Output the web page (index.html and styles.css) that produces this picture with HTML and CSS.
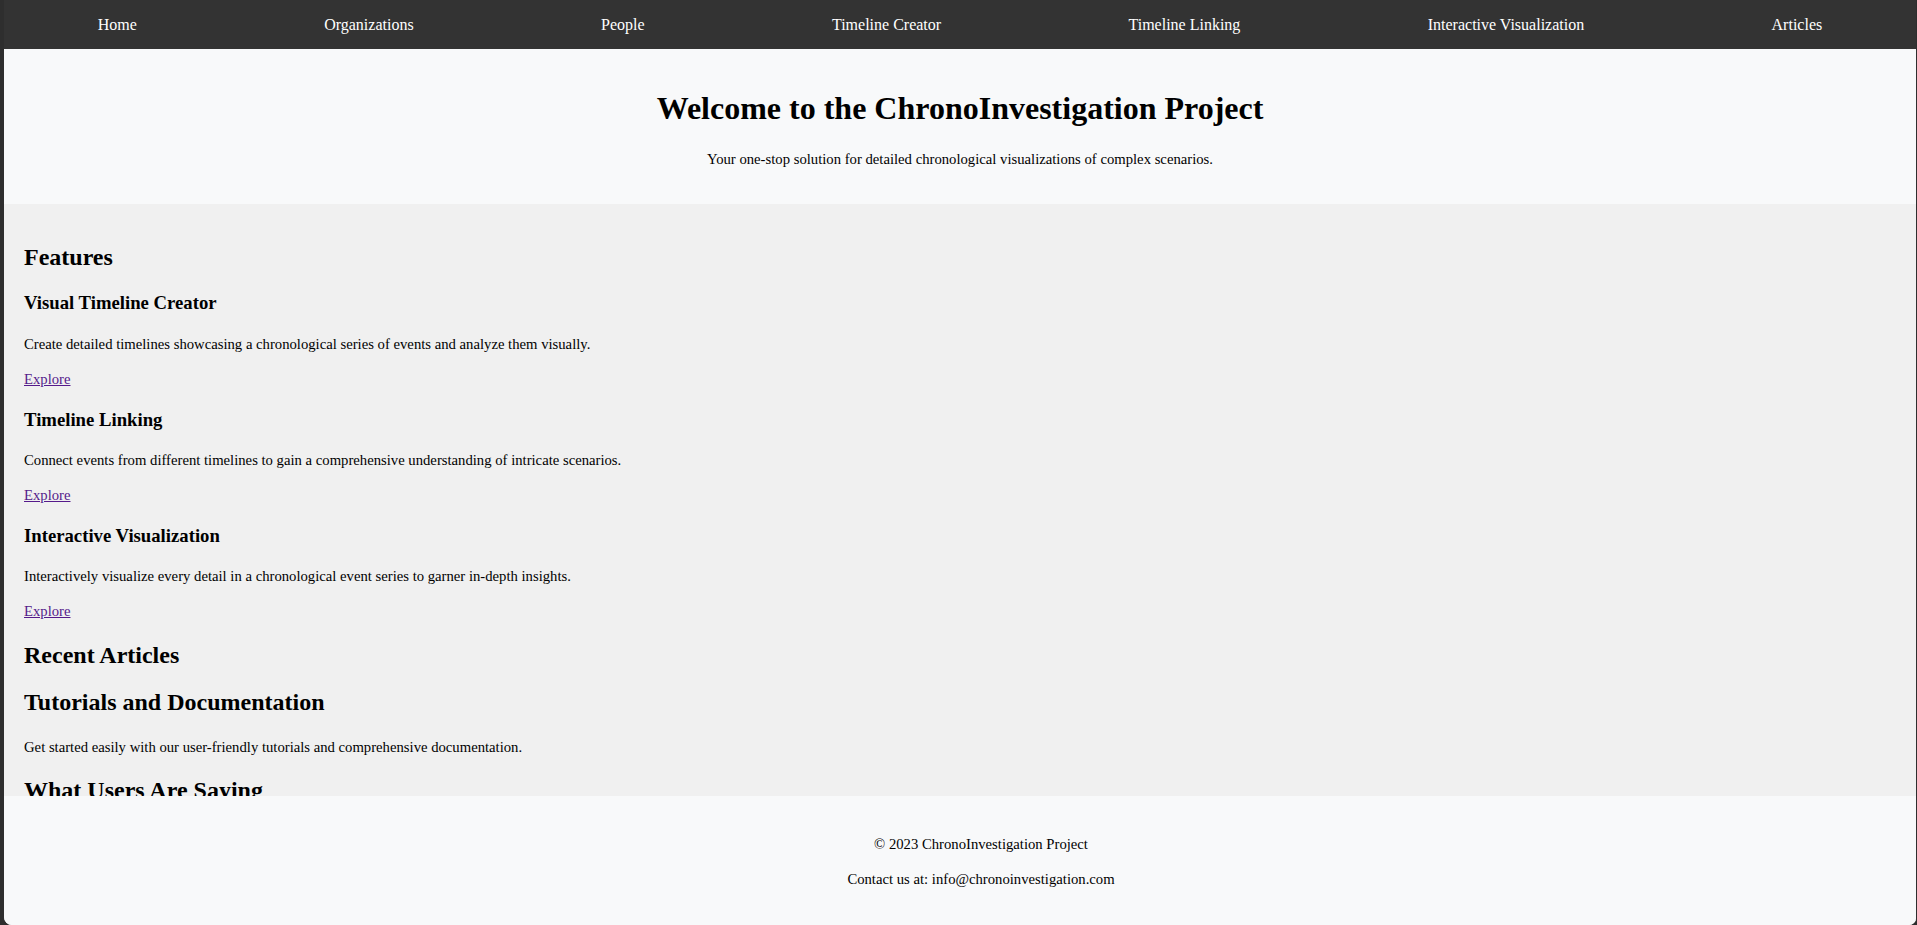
FILE: index.html
```html
<!DOCTYPE html>
<html lang="en">
<head>
<meta charset="utf-8">
<title>ChronoInvestigation Project</title>
<link rel="stylesheet" href="styles.css">
</head>
<body>
<div class="window">
  <nav class="nav">
    <a href="#" class="nav-link">Home</a>
    <a href="#" class="nav-link">Organizations</a>
    <a href="#" class="nav-link">People</a>
    <a href="#" class="nav-link">Timeline Creator</a>
    <a href="#" class="nav-link">Timeline Linking</a>
    <a href="#" class="nav-link">Interactive Visualization</a>
    <a href="#" class="nav-link">Articles</a>
  </nav>
  <header class="hero">
    <h1 class="hero-title">Welcome to the ChronoInvestigation Project</h1>
    <p class="text">Your one-stop solution for detailed chronological visualizations of complex scenarios.</p>
  </header>
  <main class="main">
    <section class="features">
      <h2 class="section-title">Features</h2>
      <div class="feature">
        <h3 class="feature-title">Visual Timeline Creator</h3>
        <p class="text">Create detailed timelines showcasing a chronological series of events and analyze them visually.</p>
        <p class="text"><a href="#" class="explore">Explore</a></p>
      </div>
      <div class="feature">
        <h3 class="feature-title">Timeline Linking</h3>
        <p class="text">Connect events from different timelines to gain a comprehensive understanding of intricate scenarios.</p>
        <p class="text"><a href="#" class="explore">Explore</a></p>
      </div>
      <div class="feature">
        <h3 class="feature-title">Interactive Visualization</h3>
        <p class="text">Interactively visualize every detail in a chronological event series to garner in-depth insights.</p>
        <p class="text"><a href="#" class="explore">Explore</a></p>
      </div>
    </section>
    <section class="articles">
      <h2 class="section-title">Recent Articles</h2>
    </section>
    <section class="tutorials">
      <h2 class="section-title">Tutorials and Documentation</h2>
      <p class="text">Get started easily with our user-friendly tutorials and comprehensive documentation.</p>
    </section>
    <section class="testimonials">
      <h2 class="section-title">What Users Are Saying</h2>
      <p class="text">ChronoInvestigation helped our team untangle a complex sequence of events in record time.</p>
    </section>
  </main>
  <footer class="footer">
    <p class="text">&copy; 2023 ChronoInvestigation Project</p>
    <p class="text">Contact us at: info@chronoinvestigation.com</p>
  </footer>
</div>
</body>
</html>
```
FILE: styles.css
```css
html, body {
  margin: 0;
  height: 100%;
}
body {
  background: #2e2e2e;
  font-family: "Liberation Serif", "Times New Roman", serif;
  font-size: 16px;
  color: #000;
}
.window {
  height: 100%;
  margin: 0 1px 0 4px;
  display: flex;
  flex-direction: column;
  border-radius: 0 0 7px 8px;
  overflow: hidden;
  background: #f8f9fa;
}
.nav {
  background: #333333;
  display: flex;
  justify-content: space-around;
  align-items: center;
  height: 49px;
  flex: none;
}
.nav-link {
  color: #ffffff;
  text-decoration: none;
}
.hero {
  background: #f8f9fa;
  padding: 20px;
  text-align: center;
  flex: none;
}
.hero-title {
  font-size: 32px;
  line-height: 37px;
  margin: 21.44px 0;
}
.text {
  font-size: 14.7px;
  line-height: 20.4px;
  margin: 14.7px 0;
}
.section-title {
  font-size: 24px;
  line-height: 27.6px;
  margin: 19.92px 0;
}
.feature-title {
  font-size: 18.72px;
  line-height: 23.4px;
  margin: 18.72px 0;
}
.main {
  background: #f0f0f0;
  padding: 20px;
  flex: 1;
  min-height: 0;
  overflow: hidden;
}
.explore {
  color: #551a8b;
}
.footer {
  background: #f8f9fa;
  padding: 23px 20px 21px 62px;
  text-align: center;
  flex: none;
}
```
